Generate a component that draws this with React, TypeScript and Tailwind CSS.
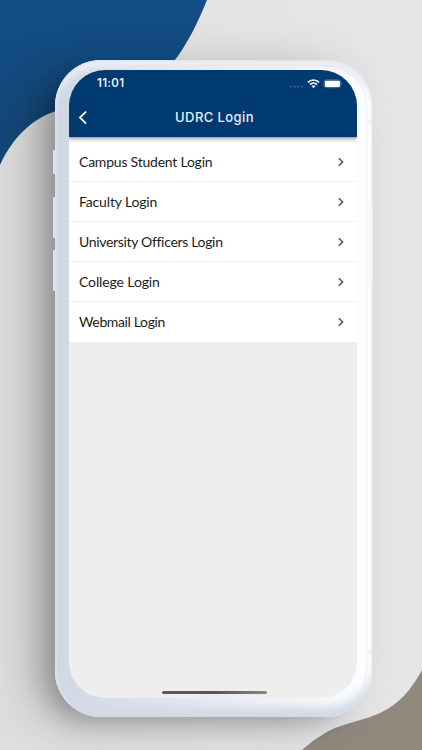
import React from "react";

const logins = [
  { name: "Campus Student Login", tracking: "tracking-[-0.22px]" },
  { name: "Faculty Login", tracking: "tracking-[-0.15px]" },
  { name: "University Officers Login", tracking: "tracking-[-0.32px]" },
  { name: "College Login", tracking: "tracking-[-0.12px]" },
  { name: "Webmail Login", tracking: "tracking-[-0.36px]" },
];

// wave shapes behind the phone
const Backdrop: React.FC = () => (
  <svg className="absolute inset-0" width="422" height="750" viewBox="0 0 422 750">
    <defs>
      <linearGradient id="blue" x1="0" y1="0" x2="0" y2="1">
        <stop offset="0" stopColor="#124f86" />
        <stop offset="1" stopColor="#144576" />
      </linearGradient>
    </defs>
    <path
      d="M0 0H207C198 22 188 43 175 60C145 98 95 98 56 111C31 119 12 139 0 165Z"
      fill="url(#blue)"
    />
    <path
      d="M422 670C412 688 400 704 380 713C368 719 350 722 335 728C322 734 311 742 302 750H422Z"
      fill="#91887e"
    />
  </svg>
);

// side buttons, antenna lines and the inner edge of the frame
const PhoneHardware: React.FC = () => (
  <svg
    className="absolute inset-0 overflow-visible"
    width="317"
    height="657"
    viewBox="0 0 317 657"
  >
    <g fill="#dce2ea">
      <rect x="-2" y="90" width="2" height="24" rx="1" />
      <rect x="-2" y="137" width="2" height="41" rx="1" />
      <rect x="-2" y="190" width="2" height="41" rx="1" />
    </g>
    <rect x="316" y="142" width="3" height="84" rx="1" fill="#f0f1f6" />
    <path d="M318.7 143V225" stroke="#d0d1d6" strokeWidth=".7" />
    <rect x="5.5" y="5.5" width="306" height="646" rx="40.5" fill="none" stroke="#d3dbe7" strokeOpacity=".4" />
    <path d="M313 61.5H317M313 63.5H317M313 590.5H317M313 592.5H317" stroke="#e9edf1" />
  </svg>
);

const StatusBar: React.FC = () => (
  <div className="flex h-[27px] items-center justify-between pl-7 pr-[15px]">
    <span className="text-[11.5px] font-semibold leading-none tracking-[0.3px] text-[#e9f1f8]">11:01</span>
    <svg width="53" height="12" viewBox="0 0 53 12">
      <g fill="#3a6691">
        <circle cx="1.8" cy="8.8" r="1" />
        <circle cx="5.6" cy="8.8" r="1" />
        <circle cx="9.3" cy="8.8" r="1" />
        <circle cx="13" cy="8.8" r="1" />
      </g>
      <g fill="none" stroke="#fff" strokeWidth="1.7">
        <path d="M19 4.3C22 1.2 27 1.2 30 4.3" />
        <path d="M21 6.6C23 4.6 26 4.6 28 6.6" />
      </g>
      <path d="M22.5 8Q24.5 6.5 26.5 8L24.5 10.2Z" fill="#fff" />
      <rect x="35.1" y="1.9" width="16.6" height="7.8" rx="2.3" fill="none" stroke="#5b81a6" strokeWidth=".8" />
      <rect x="35.9" y="2.7" width="15" height="6.2" rx="1.3" fill="#fff" />
      <path d="M52.4 4.3Q53.5 5.7 52.4 7.1Z" fill="#668aad" />
    </svg>
  </div>
);

const App: React.FC = () => {
  return (
    <div className="relative flex h-[750px] w-[422px] items-start overflow-hidden bg-linear-to-r from-[#dedede] via-[#e3e3e3] to-[#e6e6e6] pl-[55px] pt-[60px]">
      <Backdrop />

      <div className="relative flex h-[657px] w-[317px] flex-col rounded-[46px] bg-linear-to-r from-[#d0d7e4] via-[#e6ecf4] to-[#fdfeff] shadow-[-16px_12px_24px_-10px_rgba(0,0,0,0.2),-24px_8px_50px_-6px_rgba(0,0,0,0.28)]">
        <PhoneHardware />

        <div className="flex flex-1 flex-col rounded-[46px] pb-[19px] pl-[14px] pr-[15px] pt-[10px] shadow-[inset_2px_1px_2px_#dde3ee,inset_0_-14px_10px_-4px_#d2dae6,inset_0_10px_5px_-2px_#e9eef4]">
          <div className="relative flex flex-1 flex-col overflow-hidden rounded-[36px] bg-[#eeeeee] font-['Inter',sans-serif]">
            <header className="relative z-10 h-[67px] shrink-0 bg-[#003a70] shadow-[0_1px_3px_rgba(0,0,0,0.45)]">
              <StatusBar />
              <div className="flex h-10 items-center px-[9px]">
                <svg width="10" height="15" viewBox="0 0 10 15">
                  <path d="M8.1 1.6L2 7.6L8.1 13.6" fill="none" stroke="#fff" strokeWidth="1.8" />
                </svg>
                <h1 className="flex-1 pr-[7px] pt-[2px] text-center text-[13px] font-medium tracking-[0.4px] text-[#e8f0f7]">
                  UDRC Login
                </h1>
              </div>
            </header>

            <ul className="mt-[5px] divide-y divide-[#f0f0f0] bg-white">
              {logins.map(({ name, tracking }) => (
                <li key={name} className="flex h-10 items-center justify-between pl-[10px] pr-3">
                  <span className={`pb-px font-['Lato',sans-serif] text-[14px] text-[#1c1c1c] ${tracking}`}>
                    {name}
                  </span>
                  <svg width="8" height="10" viewBox="0 0 8 10">
                    <path d="M1.8 1.2L5.6 5L1.8 8.8" fill="none" stroke="#555" strokeWidth="1.6" />
                  </svg>
                </li>
              ))}
            </ul>

            <div className="flex flex-1 items-end justify-center pb-1 pl-[3px]">
              <div className="h-[3.5px] w-[105px] rounded-full bg-linear-to-r from-[#5b5b59] via-[#555] to-[#888]" />
            </div>
          </div>
        </div>
      </div>
    </div>
  );
};

export default App;
